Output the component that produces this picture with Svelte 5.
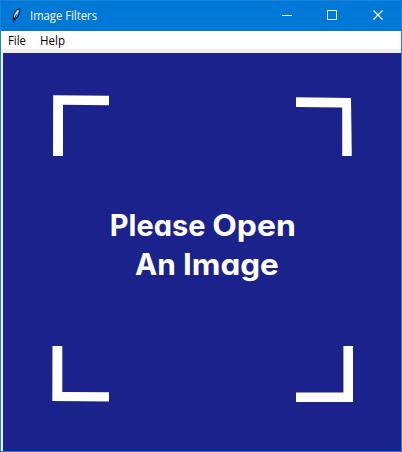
<script>
  const menus = [
    { label: 'File', width: 18 },
    { label: 'Help', width: 25 }
  ];
  const words = [
    { text: 'Please', x: 109.8, y: 235.8, width: 95.6 },
    { text: 'Open', x: 212.2, y: 235.8, width: 83.6 },
    { text: 'An', x: 135, y: 274.8, width: 40.8 },
    { text: 'Image', x: 183, y: 274.8, width: 95.8 }
  ];
</script>

<div class="window">
  <header class="titlebar">
    <svg class="feather" width="12" height="18" viewBox="0 0 12 18">
      <path d="M3.2 14 C1.8 10 3.6 4 9.6 0.8 C11 4 9.8 9.5 5 13 Z" fill="#101820" />
      <path d="M3.8 11 C3.4 7.5 5.4 3.8 8.9 2.2 C9.2 5.6 8 9.4 4.8 11.6 Z" fill="#6fa6e4" />
      <path d="M8.2 3.4 L4.6 10.4" stroke="#e4f1ff" stroke-width="1.3" fill="none" />
      <path d="M6.6 7.4 L4.2 12 L3.6 16" stroke="#0b1118" stroke-width="0.9" fill="none" />
    </svg>
    <svg class="title" width="80" height="30">
      <text x="0" y="20" textLength="67" lengthAdjust="spacingAndGlyphs">Image Filters</text>
    </svg>
    <div class="controls">
      <svg width="45" height="30"><path d="M11 14.5H21" /></svg>
      <svg width="46" height="30"><path d="M11.5 9.5h9v9h-9z" /></svg>
      <svg width="39" height="30"><path d="M11.5 9.5l9 9M20.5 9.5l-9 9" stroke-width="1.2" /></svg>
    </div>
  </header>
  <nav>
    {#each menus as menu}
      <svg width={menu.width} height="18">
        <text x="0" y="14" textLength={menu.width} lengthAdjust="spacingAndGlyphs">{menu.label}</text>
      </svg>
    {/each}
  </nav>
  <main>
    <svg width="398" height="398" viewBox="3 53 398 398">
      <g fill="#fff">
        <path d="M53.2 95.2L109 95.8V105.2L63 104.7V156H53z" />
        <path d="M296 97.2L351 98L351.8 156H342.2V107.6L296 107z" />
        <path d="M52.5 346H62.3V392L109 392.2V401.6L52.3 401z" />
        <path d="M343.4 346H353V402H296V392.4H343.4z" />
      </g>
      <g class="message">
        {#each words as word}
          <text x={word.x} y={word.y} textLength={word.width} lengthAdjust="spacingAndGlyphs">{word.text}</text>
        {/each}
      </g>
    </svg>
  </main>
</div>

<style>
  :global(body) { margin: 0; }
  .window {
    box-sizing: border-box;
    width: 402px;
    height: 452px;
    border: 1px solid #1883d7;
    background: #f0f0f0;
    display: flex;
    flex-direction: column;
    overflow: hidden;
    font-family: 'Open Sans', 'Noto Sans', sans-serif;
    font-size: 12px;
  }
  svg { display: block; flex: none; }
  .titlebar {
    height: 30px;
    flex: none;
    background: #0078d7;
    display: flex;
    align-items: flex-start;
  }
  .feather { margin: 6px 0 0 9px; }
  .title { margin-left: 8px; margin-top: -1px; fill: #fff; }
  .controls { display: flex; margin-left: auto; }
  .controls path { fill: none; stroke: #fff; }
  nav {
    height: 18px;
    flex: none;
    background: #fff;
    display: flex;
    gap: 14px;
    padding-left: 7px;
    fill: #000;
  }
  main {
    margin: 4px 0 0 2px;
    width: 398px;
    height: 398px;
    background: #1c228c;
  }
  .message {
    fill: #fff;
    font-family: Inter, 'Liberation Sans', sans-serif;
    font-size: 29.5px;
    font-weight: 700;
    font-feature-settings: 'cv11' 1;
  }
</style>
